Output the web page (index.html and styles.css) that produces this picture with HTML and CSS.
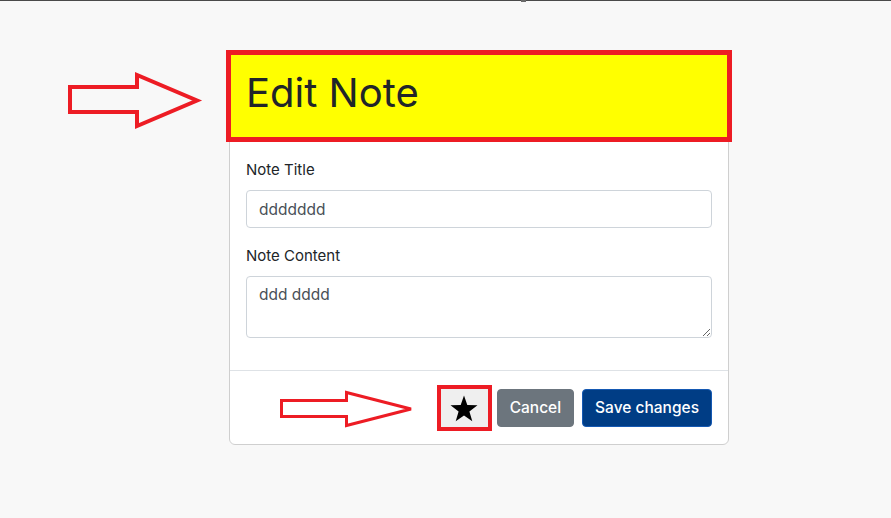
FILE: index.html
```html
<!DOCTYPE html>
<html lang="en">
<head>
<meta charset="utf-8">
<title>Edit Note</title>
<link rel="stylesheet" href="styles.css">
</head>
<body>
<div class="topbar"><span class="topbar-tab"></span></div>
<main class="stage">
  <section class="modal">
    <header class="modal-header">
      <h1 class="modal-title">Edit Note</h1>
    </header>
    <div class="modal-body">
      <div class="field">
        <label class="field-label" for="title">Note Title</label>
        <input class="form-control" id="title" type="text" value="ddddddd">
      </div>
      <div class="field">
        <label class="field-label" for="content">Note Content</label>
        <textarea class="form-control form-area" id="content" rows="2">ddd dddd</textarea>
      </div>
    </div>
    <footer class="modal-footer">
      <button class="star-btn" type="button" aria-label="Favourite">
        <svg class="star-icon" width="28" height="27" viewBox="0 0 28 27">
          <polygon points="14,0.5 17.3,10 27.5,10.2 19.4,16.4 22.3,26.3 14,20.4 5.7,26.3 8.6,16.4 0.5,10.2 10.7,10" fill="#000"/>
        </svg>
      </button>
      <button class="btn btn-secondary" type="button">Cancel</button>
      <button class="btn btn-primary" type="button">Save changes</button>
    </footer>
  </section>

  <svg class="arrow arrow-title" width="150" height="70" viewBox="60 65 150 70">
    <polygon points="70,86 137,86 137,74 197,99.5 137,125 137,111 70,111" fill="none" stroke="#ed1c24" stroke-width="4" stroke-linejoin="miter"/>
  </svg>
  <svg class="arrow arrow-star" width="140" height="42" viewBox="278 388 140 42">
    <polygon points="281.5,399.5 346.5,399.5 346.5,391.5 411,408 346.5,424.5 346.5,415.5 281.5,415.5" fill="none" stroke="#ed1c24" stroke-width="3"/>
  </svg>
</main>
</body>
</html>
```

FILE: styles.css
```css
* { box-sizing: border-box; }

html, body {
  margin: 0;
  padding: 0;
}

body {
  background: #f8f8f8;
  font-family: "Inter", "DejaVu Sans", sans-serif;
  color: #212529;
  height: 518px;
  overflow: hidden;
}

.topbar {
  position: relative;
  height: 1px;
  background: #4a4a4a;
}

.topbar-tab {
  position: absolute;
  left: 521px;
  top: 0;
  width: 5px;
  height: 2px;
  background: #6a6a6a;
}

.stage {
  position: relative;
  padding-top: 49px;
  height: 517px;
}

.modal {
  margin-left: 229px;
  width: 500px;
  background: #fff;
  border: 1px solid #cfcfcf;
  border-radius: 6px;
}

.modal-header {
  margin: -1px -4px 0;
  background: #ffff00;
  border: 5px solid #ed1c24;
  padding: 14px 15px 20px;
}

.modal-title {
  margin: 0;
  font-size: 40px;
  line-height: 48px;
  font-weight: 400;
  color: #212529;
}

.modal-body {
  padding: 16px 16px 16px;
}

.field {
  margin-bottom: 16px;
}

.field-label {
  display: block;
  font-size: 15px;
  line-height: 24px;
  margin-bottom: 8px;
  color: #212529;
}

.form-control {
  display: block;
  width: 100%;
  height: 38px;
  padding: 6px 12px;
  font-family: inherit;
  font-size: 15.5px;
  line-height: 24px;
  color: #495057;
  background: #fff;
  border: 1px solid #ced4da;
  border-radius: 4px;
  outline: none;
}

.form-area {
  height: 62px;
  resize: vertical;
}

.modal-footer {
  display: flex;
  align-items: center;
  justify-content: flex-end;
  border-top: 1px solid #dee2e6;
  padding: 14px 16px 13px;
}

.star-btn {
  display: flex;
  align-items: center;
  justify-content: center;
  width: 55px;
  height: 46px;
  padding: 0;
  margin-right: 5px;
  background: #efefef;
  border: 4px solid #ed1c24;
}

.btn {
  height: 38px;
  padding: 0 12px;
  font-family: inherit;
  font-size: 15.5px;
  font-weight: 500;
  line-height: 24px;
  color: #fff;
  border-radius: 4px;
  border: 1px solid transparent;
}

.btn-secondary {
  background: #6c757d;
  border-color: #6c757d;
  margin-right: 8px;
}

.btn-primary {
  background: #003d85;
  border-color: #1559b3;
}

.arrow {
  position: absolute;
  display: block;
}

.arrow-title {
  left: 60px;
  top: 65px;
}

.arrow-star {
  left: 278px;
  top: 388px;
}
```
